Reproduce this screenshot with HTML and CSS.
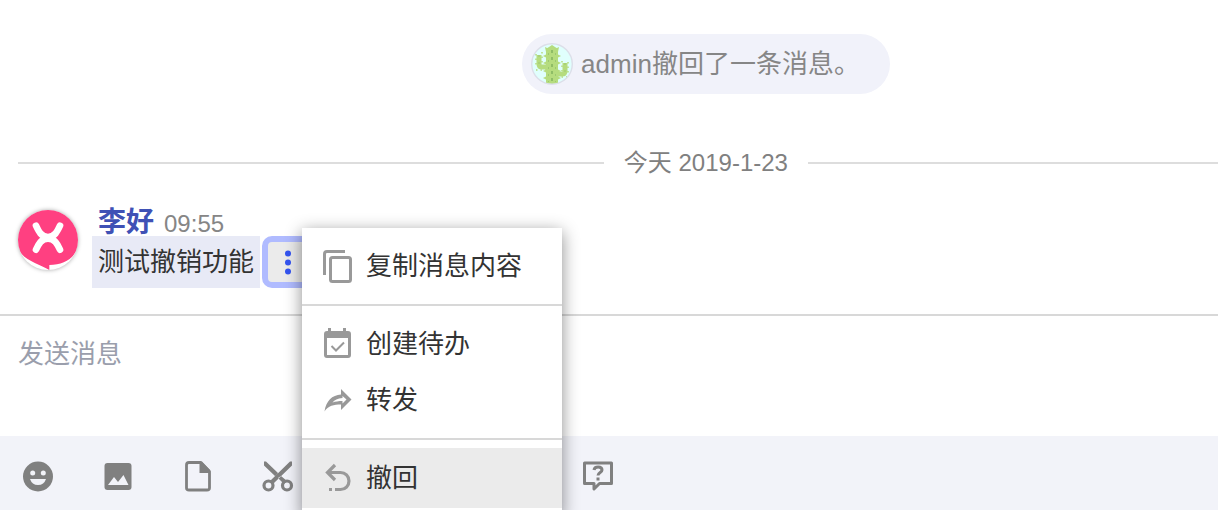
FILE: index.html
```html
<!DOCTYPE html>
<html lang="zh-CN">
<head>
<meta charset="utf-8">
<meta name="viewport" content="width=device-width, initial-scale=1">
<title>消息</title>
<link rel="stylesheet" href="styles.css">
</head>
<body>
<main class="chat">
  <section class="log">
    <div class="notice">
      <svg class="notice-avatar" viewBox="0 0 42 42" aria-hidden="true">
        <circle cx="21" cy="21" r="20" fill="#e0fffd"/>
        <g fill="none" stroke="#b5dc7e" stroke-linejoin="round">
          <path stroke-width="5" d="M8 12v9q0 3 3 3h6M34 20v8q0 3-3 3h-6"/>
          <path stroke-width="1.500" stroke-dasharray="1.500 3" d="M5 11v13M11 9v12M31 18v10M37 19v13M5 27h10M26 34h10"/>
        </g>
        <path fill="#b5dc7e" d="M15 40V8q0-3 3-4l3-2 3 2q3 1 3 4v32q-6 2-12 0z"/>
        <path fill="#b5dc7e" d="M14 4l4 2-3 3zM28 4l-4 2 3 3zM12 13l4-2v4zM30 13l-4-2v4zM12 20l4-2v4zM30 20l-4-2v4zM12 28l4-2v4zM30 28l-4-2v4zM12 35l4-2v4zM30 35l-4-2v4z"/>
        <path fill="none" stroke="#8fbd66" stroke-width="2" stroke-dasharray="3 4" d="M21 7v33"/>
        <path fill="none" stroke="#9cc970" stroke-width="1" stroke-dasharray="2 5" d="M17.500 10v29M24.500 10v29M8 12v11M34 20v10"/>
        <circle cx="21" cy="21" r="20.300" fill="none" stroke="#dcdfe9" stroke-width="1.400"/>
      </svg>
      <span>admin撤回了一条消息。</span>
    </div>
    <div class="day"><span>今天 2019-1-23</span></div>
    <article class="message">
      <svg class="avatar" viewBox="0 0 180 180" aria-hidden="true">
        <path fill="#ff4081" d="M0 0h180v112c-16 40-46 51-86 53v15C66 163 20 152 4 122L0 110z"/>
        <path fill="none" stroke="#fff" stroke-width="20" stroke-linecap="round" d="M54 47C62 64 70 81 90 81s28-17 36-34M54 119C62 102 70 86 90 86s28 16 36 33"/>
      </svg>
      <div class="message-main">
        <header class="message-head"><a class="name" href="#">李好</a><time>09:55</time></header>
        <div class="message-row">
          <p class="bubble">测试撤销功能</p>
          <div class="actions">
            <button class="more" type="button" aria-label="更多" aria-expanded="true">
              <svg viewBox="0 0 40 40" fill="#3454f0"><circle cx="20" cy="11.500" r="3"/><circle cx="20" cy="20.500" r="3"/><circle cx="20" cy="29.500" r="3"/></svg>
            </button>
            <div class="menu" role="menu">
              <button class="item" type="button" role="menuitem">
                <svg viewBox="0 0 36 36" fill="none" stroke="#999" stroke-width="3"><path d="M4.500 27V6q0-2.500 2.500-2.500h18"/><rect x="10.500" y="9.500" width="20" height="24" rx="2"/></svg>
                复制消息内容
              </button>
              <hr>
              <button class="item" type="button" role="menuitem">
                <svg viewBox="0 0 36 36"><path fill="#999" fill-rule="evenodd" d="M8 2h3v3h12V2h3v3h2q3 0 3 3v21q0 3-3 3H7q-3 0-3-3V8q0-3 3-3h1zM7 12v17h21V12z"/><path fill="none" stroke="#999" stroke-width="2" d="M11.500 20l4.500 4.500 8-8"/></svg>
                创建待办
              </button>
              <button class="item" type="button" role="menuitem">
                <svg viewBox="0 0 36 36"><path fill="#999" fill-rule="evenodd" d="M21 7l10.500 10.500L21 28v-5.500c-7 0-13 1-16.500 7C6 19 12 13 21 12.500zM22.500 14v2c-5 .5-8 2-10 4.500 3-1 6-1.500 10-1.500v2.500l4-4z"/></svg>
                转发
              </button>
              <hr>
              <button class="item is-active" type="button" role="menuitem">
                <svg viewBox="0 0 36 36" fill="none" stroke="#999" stroke-width="3.200"><path d="M15 5l-7.500 7.500L15 20M8 12.500h12.500a8.500 8.500 0 0 1 0 17H15M9 29.500h3"/></svg>
                撤回
              </button>
            </div>
          </div>
        </div>
      </div>
    </article>
  </section>
  <form class="composer">
    <textarea class="draft" aria-label="发送消息" placeholder="发送消息"></textarea>
    <div class="toolbar">
      <button class="tool" type="button" aria-label="表情"><svg viewBox="0 0 36 36"><circle cx="18" cy="18.500" r="15" fill="#808080"/><g fill="#f2f3f9"><circle cx="12.700" cy="15" r="2.500"/><circle cx="23.300" cy="15" r="2.500"/><path d="M10 21h16q-2 6-8 6t-8-6z"/></g></svg></button>
      <button class="tool" type="button" aria-label="图片"><svg viewBox="0 0 36 36"><rect x="4.500" y="5" width="27" height="27" rx="3" fill="#808080"/><path fill="#f2f3f9" d="M8 27l6-8 4 5 5.500-7L28.500 27z"/></svg></button>
      <button class="tool" type="button" aria-label="文件"><svg viewBox="0 0 36 36"><path fill="none" stroke="#808080" stroke-width="2.800" stroke-linejoin="round" d="M9 4.500h12l8.500 9V30q0 2-2.500 2H9Q6.500 32 6.500 30V7q0-2.500 2.500-2.500z"/><path fill="#808080" d="M19.500 4h2.500l8 8v3H19.500z"/></svg></button>
      <button class="tool" type="button" aria-label="截图"><svg viewBox="0 0 36 36"><path fill="#808080" d="M4 3.500h2L18 15l-3 3L4 7.500zM32 3.500h-2L10 23l3 3L32 7.500zM18 20l3-2 6 5-3 3z"/><g fill="none" stroke="#808080" stroke-width="3.200"><circle cx="8.500" cy="27.500" r="4.500"/><circle cx="27" cy="27.500" r="4.500"/></g></svg></button>
      <button class="tool tool-help" type="button" aria-label="帮助"><svg viewBox="0 0 36 36" fill="none" stroke="#808080" stroke-width="3"><path stroke-linejoin="round" d="M4.500 5h27v20.500h-12L14 31v-5.500H4.500z"/><path stroke-width="3" d="M14 12c.5-4 8-4 8 0 0 2.500-4 2.500-4 5.500M18 19.500v3"/></svg></button>
    </div>
  </form>
</main>
</body>
</html>
```
FILE: styles.css
```css
* {
  box-sizing: border-box;
}

body {
  margin: 0;
  overflow: hidden;
  background: #fff;
  color: #333;
  font: 26px/36px "Liberation Sans", "Noto Sans CJK SC", sans-serif;
}

button,
textarea {
  margin: 0;
  border: 0;
  font: inherit;
  color: inherit;
}

svg {
  display: block;
  flex: none;
}

.chat {
  min-height: 100vh;
  display: flex;
  flex-direction: column;
}

.log {
  flex: 1 0 auto;
  display: flex;
  flex-direction: column;
  padding: 34px 0 26px 18px;
}

.notice {
  align-self: center;
  display: flex;
  align-items: center;
  gap: 8px;
  height: 60px;
  margin-left: 176px;
  padding: 0 30px 0 9px;
  border-radius: 30px;
  background: #f1f2fa;
  color: #868686;
}

.notice-avatar {
  width: 42px;
  height: 42px;
}

.day {
  display: flex;
  align-items: center;
  gap: 20px;
  margin-top: 51px;
  color: #808080;
  font-size: 24px;
}

.day::before,
.day::after {
  content: "";
  flex: 10;
  height: 2px;
  background: #ddd;
}

.day::after {
  flex: 7;
}

.message {
  display: flex;
  align-items: flex-start;
  gap: 14px;
  margin-top: 23px;
}

.avatar {
  width: 60px;
  height: 60px;
  margin-top: 6px;
  border-radius: 50%;
  box-shadow: 0 0 4px rgba(0, 0, 0, 0.35);
}

.message-head {
  display: flex;
  align-items: baseline;
  gap: 10px;
  height: 32px;
  padding-left: 6px;
}

.name {
  color: #3f51b5;
  font-size: 28px;
  font-weight: 700;
  line-height: 38px;
  text-decoration: none;
}

.message-head time {
  color: #868686;
  font-size: 24px;
}

.message-row {
  display: flex;
  gap: 2px;
}

.bubble {
  margin: 0;
  padding: 8px 6px;
  background: #e8eaf6;
}

.actions {
  position: relative;
}

.more {
  display: block;
  width: 52px;
  height: 52px;
  padding: 0;
  border: 6px solid #b0bbff;
  border-radius: 10px;
  background: #ebebeb;
}

.menu {
  position: absolute;
  z-index: 2;
  top: -8px;
  left: 40px;
  width: 260px;
  padding: 10px 0;
  background: #fff;
  box-shadow: 0 4px 16px rgba(0, 0, 0, 0.45);
}

.menu hr {
  height: 2px;
  margin: 10px 0;
  border: 0;
  background: #d8d8d8;
}

.item {
  display: flex;
  align-items: center;
  gap: 10px;
  width: 100%;
  height: 56px;
  padding: 0 18px;
  background: none;
  text-align: left;
}

.item svg,
.tool svg {
  width: 36px;
  height: 36px;
}

.item.is-active {
  background: #ebebeb;
  box-shadow: 0 0 0 2px #ebebeb;
  clip-path: inset(-2px 0);
}

.composer {
  display: flex;
  flex-direction: column;
  border-top: 2px solid #d8d8d8;
}

.draft {
  display: block;
  width: 100%;
  height: 120px;
  padding: 20px 18px;
  outline: 0;
  resize: none;
  background: #fff;
}

.draft::placeholder {
  color: #9a9eac;
}

.toolbar {
  display: grid;
  grid-auto-columns: 36px;
  grid-auto-flow: column;
  gap: 44px;
  padding: 22px 20px 16px;
  background: #f2f3f9;
}

.tool {
  padding: 0;
  background: none;
}

.tool-help {
  grid-column: 8;
}
```
